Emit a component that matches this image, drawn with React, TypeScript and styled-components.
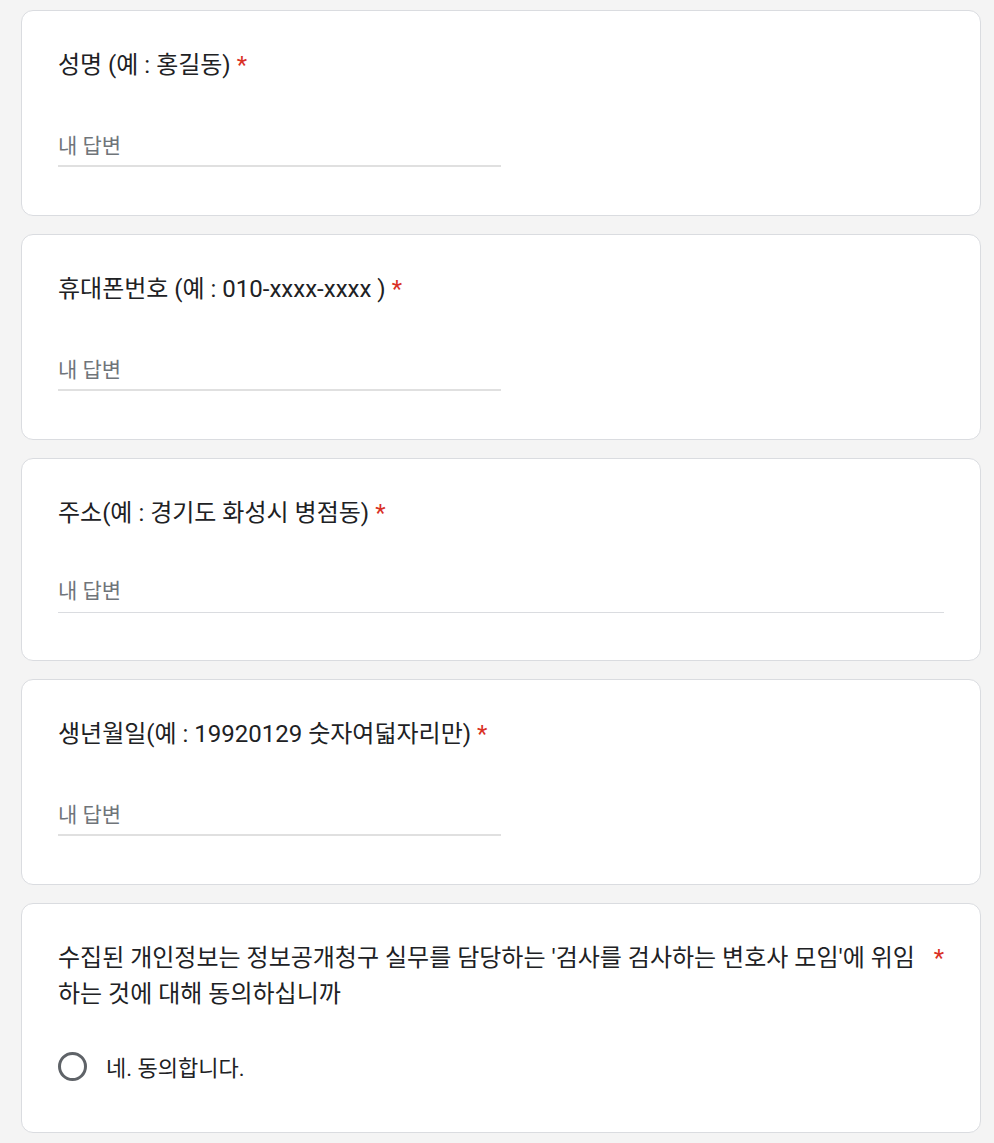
import React from "react";
import styled, { createGlobalStyle } from "styled-components";

const GlobalStyle = createGlobalStyle`
  html, body {
    margin: 0;
    padding: 0;
    background: #f4f4f4;
  }
  body {
    font-family: Roboto, "Noto Sans CJK KR", "Noto Sans", sans-serif;
    color: #202124;
  }
`;

const Page = styled.main`
  display: flex;
  flex-direction: column;
  gap: 18px;
  width: 960px;
  padding: 10px 0 10px 21px;
  box-sizing: content-box;
`;

const Card = styled.section`
  background: #ffffff;
  border: 1px solid #dadce0;
  border-radius: 12px;
  padding: 36px;
`;

const TitleRow = styled.div`
  display: flex;
  align-items: flex-start;
  font-size: 24px;
  line-height: 36px;
  color: #202124;
  letter-spacing: 0;
`;

const TitleText = styled.div`
  min-width: 0;
  white-space: pre-wrap;
`;

const Asterisk = styled.span`
  flex-shrink: 0;
  padding-left: 6px;
  color: #d93025;
`;

const Field = styled.div<{ $long?: boolean }>`
  width: ${(p) => (p.$long ? "100%" : "443px")};
  margin-top: ${(p) => (p.$long ? "44px" : "47px")};
  margin-bottom: ${(p) => (p.$long ? "11px" : "12px")};
`;

const Placeholder = styled.div<{ $long?: boolean }>`
  height: 32px;
  line-height: 32px;
  font-size: 21px;
  color: #70757a;
  padding-bottom: ${(p) => (p.$long ? "5px" : "3px")};
  border-bottom: ${(p) => (p.$long ? "1px solid #dadce0" : "2px solid #e0e0e0")};
`;

const Options = styled.div`
  padding: 30px 0 6px;
`;

const OptionRow = styled.label`
  display: flex;
  align-items: center;
  height: 48px;
  gap: 19px;
  font-size: 22px;
  color: #202124;
`;

const Radio = styled.span`
  width: 29px;
  height: 29px;
  box-sizing: border-box;
  border: 3px solid #5f6368;
  border-radius: 50%;
  flex-shrink: 0;
`;

type Q = { title: string; long?: boolean };

const questions: Q[] = [
  { title: "성명 (예 : 홍길동)" },
  { title: "휴대폰번호 (예 : 010-xxxx-xxxx )" },
  { title: "주소(예 : 경기도 화성시 병점동)", long: true },
  { title: "생년월일(예 : 19920129 숫자여덟자리만)" },
];

export default function App() {
  return (
    <>
      <GlobalStyle />
      <Page>
        {questions.map((q) => (
          <Card key={q.title}>
            <TitleRow>
              <TitleText>{q.title}</TitleText>
              <Asterisk>*</Asterisk>
            </TitleRow>
            <Field $long={q.long}>
              <Placeholder $long={q.long}>내 답변</Placeholder>
            </Field>
          </Card>
        ))}
        <Card>
          <TitleRow>
            <TitleText>
              수집된 개인정보는 정보공개청구 실무를 담당하는 '검사를 검사하는 변호사 모임'에 위임하는 것에 대해 동의하십니까
            </TitleText>
            <Asterisk>*</Asterisk>
          </TitleRow>
          <Options>
            <OptionRow>
              <Radio />
              <span>네. 동의합니다.</span>
            </OptionRow>
          </Options>
        </Card>
      </Page>
    </>
  );
}
